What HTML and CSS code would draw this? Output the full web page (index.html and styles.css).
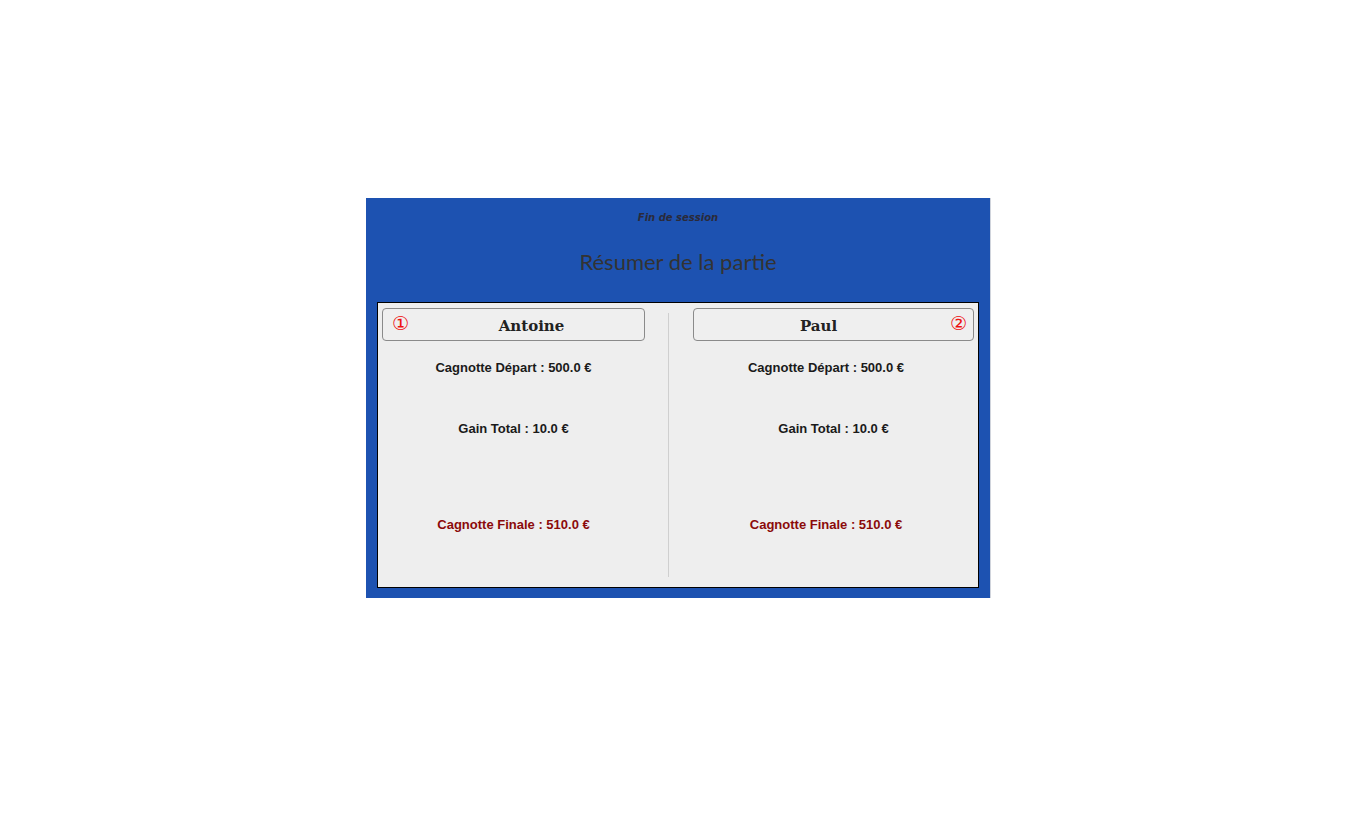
FILE: index.html
```html
<!DOCTYPE html>
<html lang="fr">
<head>
<meta charset="utf-8">
<title>Fin de session</title>
<link rel="stylesheet" href="styles.css">
</head>
<body>
<div class="dialog">
  <div class="win-title">Fin de session</div>
  <h1 class="heading">Résumer de la partie</h1>
  <div class="panel">
    <div class="col col-left">
      <div class="name-box name-box-left"><span class="rank rank-left">①</span><span class="name">Antoine</span></div>
      <div class="line l-start">Cagnotte Départ : 500.0 €</div>
      <div class="line l-gain">Gain Total : 10.0 €</div>
      <div class="line l-final">Cagnotte Finale : 510.0 €</div>
    </div>
    <div class="divider"></div>
    <div class="col col-right">
      <div class="name-box name-box-right"><span class="name">Paul</span><span class="rank rank-right">②</span></div>
      <div class="line l-start shift">Cagnotte Départ : 500.0 €</div>
      <div class="line l-gain">Gain Total : 10.0 €</div>
      <div class="line l-final shift">Cagnotte Finale : 510.0 €</div>
    </div>
  </div>
</div>
</body>
</html>
```
FILE: styles.css
```css
html, body {
  margin: 0;
  padding: 0;
  background: #ffffff;
}
body {
  padding-top: 198px;
  font-family: "Liberation Sans", Arial, sans-serif;
}
.dialog {
  margin-left: 366px;
  width: 624px;
  height: 400px;
  box-sizing: border-box;
  background: #1d52b1;
  box-shadow: 1px 0 0 #d0d4dc;
  padding: 0 11px 10px 11px;
  display: flex;
  flex-direction: column;
}
.win-title {
  margin-top: 13px;
  height: 14px;
  line-height: 14px;
  text-align: center;
  font-family: "DejaVu Sans", sans-serif;
  font-style: italic;
  font-weight: bold;
  font-size: 10px;
  color: #2a2a3a;
}
.heading {
  margin: 22px 0 0 0;
  height: 30px;
  line-height: 30px;
  text-align: center;
  font-family: "Lato", sans-serif;
  font-weight: normal;
  font-size: 22px;
  color: #333333;
}
.panel {
  margin-top: 25px;
  height: 286px;
  box-sizing: border-box;
  background: #eeeeee;
  border: 1px solid #000000;
  display: flex;
  padding: 5px 4px 0 4px;
}
.col {
  display: flex;
  flex-direction: column;
  align-items: center;
}
.col-left { width: 263px; }
.col-right { width: 281px; margin-left: 1px; }
.divider {
  width: 1px;
  background: #cfcfcf;
  margin: 5px 23px 10px 23px;
}
.name-box {
  align-self: stretch;
  height: 33px;
  box-sizing: border-box;
  border: 1px solid #8a8a8a;
  border-radius: 4px;
  background: #efefef;
  display: flex;
  align-items: center;
  justify-content: center;
  position: relative;
}
.name-box-left { padding-left: 36px; }
.name-box-right { padding-right: 30px; }
.name {
  font-family: "DejaVu Serif", serif;
  font-weight: bold;
  font-size: 15px;
  color: #222222;
  padding-top: 2px;
}
.rank {
  position: absolute;
  top: 4px;
  font-family: "DejaVu Sans", sans-serif;
  font-size: 19px;
  line-height: 20px;
  color: #ee1111;
}
.rank-left { left: 9px; }
.rank-right { right: 6px; }
.line {
  font-size: 13px;
  font-weight: bold;
  color: #1a1a1a;
  line-height: 15px;
}
.l-start { margin-top: 19px; }
.l-gain { margin-top: 46px; }
.l-final { margin-top: 81px; color: #8b0a0a; }
.shift { margin-right: 15px; }
```
